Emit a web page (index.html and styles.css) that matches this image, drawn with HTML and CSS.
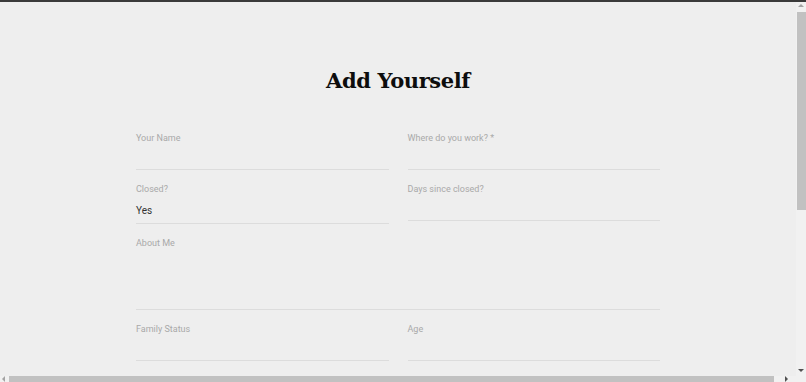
FILE: index.html
```html
<!DOCTYPE html>
<html lang="en">
<head>
    <meta charset="UTF-8">
    <meta name="viewport" content="width=device-width, initial-scale=1.0">
    <title>Add Yourself</title>
    <link rel="stylesheet" href="styles.css">
</head>
<body>
    <div class="top-bar"></div>
    <div class="page">
        <h1>Add Yourself</h1>

        <form class="add-form">
            <div class="form-row">
                <div class="field">
                    <label>Your Name</label>
                    <input type="text">
                </div>
                <div class="field">
                    <label>Where do you work? *</label>
                    <input type="text">
                </div>
            </div>

            <div class="form-row">
                <div class="field">
                    <label>Closed?</label>
                    <div class="select-value">Yes</div>
                </div>
                <div class="field">
                    <label>Days since closed?</label>
                    <input type="text" class="short">
                </div>
            </div>

            <div class="field">
                <label>About Me</label>
                <textarea></textarea>
            </div>

            <div class="form-row">
                <div class="field">
                    <label>Family Status</label>
                    <input type="text">
                </div>
                <div class="field">
                    <label>Age</label>
                    <input type="text">
                </div>
            </div>
        </form>
    </div>

    <!-- scrollbars drawn over the page -->
    <div class="vscroll">
        <span class="arrow up"></span>
        <span class="thumb"></span>
        <span class="arrow down"></span>
    </div>
    <div class="hscroll">
        <span class="arrow left"></span>
        <span class="thumb"></span>
        <span class="arrow right"></span>
    </div>
</body>
</html>
```

FILE: styles.css
```css
:root {
    --bg: #eeeeee;
    --label: #a9a9a9;
    --line: #dcdcdc;
    --text-color: #333;
    --track: #f1f1f1;
    --thumb: #c1c1c1;
}

html {
    background: var(--bg);
}

body {
    margin: 0;
    font-family: Roboto, 'Liberation Sans', sans-serif;
    color: var(--text-color);
    width: 796px;
    height: 382px;
    overflow: hidden;
}

.top-bar {
    position: fixed;
    top: 0;
    left: 0;
    right: 0;
    height: 2px;
    background: #3a3a3a;
    z-index: 2;
}

.page {
    width: 524px;
    margin: 0 auto;
    padding-top: 66px;
}

h1 {
    margin: 0 0 36px;
    text-align: center;
    font-family: 'DejaVu Serif', serif;
    font-size: 21px;
    font-weight: bold;
    letter-spacing: -0.4px;
    color: #0d0d0d;
    line-height: 30px;
}

.form-row {
    display: flex;
    gap: 19px;
}

.form-row .field {
    flex: 1;
}

.field {
    display: flex;
    flex-direction: column;
    margin-bottom: 13px;
}

.field label {
    font-size: 9px;
    line-height: 12px;
    color: var(--label);
}

.field input,
.field textarea {
    height: 25px;
    padding: 0;
    border: none;
    border-bottom: 1px solid var(--line);
    background: transparent;
    font: inherit;
    outline: none;
}

.field input.short {
    height: 25px;
}

.field textarea {
    height: 60px;
    resize: none;
}

.select-value {
    height: 28px;
    line-height: 32px;
    font-size: 10px;
    color: var(--text-color);
    border-bottom: 1px solid var(--line);
}

/* fake scrollbars */
.vscroll {
    position: fixed;
    top: 2px;
    right: 0;
    width: 10px;
    bottom: 6px;
    background: var(--track);
    display: flex;
    flex-direction: column;
    align-items: center;
}

.vscroll .thumb {
    width: 9px;
    height: 198px;
    margin-top: 5px;
    background: var(--thumb);
}

.vscroll .arrow.down {
    margin-top: auto;
    margin-bottom: 4px;
}

.hscroll {
    position: fixed;
    left: 0;
    right: 0;
    bottom: 0;
    height: 6px;
    background: var(--track);
    display: flex;
    align-items: center;
}

.hscroll .thumb {
    width: 765px;
    height: 6px;
    margin-left: 4px;
    background: var(--thumb);
}

.hscroll .arrow.right {
    margin-left: 11px;
}

.arrow {
    width: 0;
    height: 0;
    border: 3px solid transparent;
}

.arrow.up {
    margin-top: 2px;
    border-top: none;
    border-bottom: 3px solid #a3a3a3;
}

.arrow.down {
    border-bottom: none;
    border-top: 3px solid #505050;
}

.arrow.left {
    margin-left: 2px;
    border-left: none;
    border-right: 3px solid #a3a3a3;
}

.arrow.right {
    border-right: none;
    border-left: 3px solid #505050;
}
```
